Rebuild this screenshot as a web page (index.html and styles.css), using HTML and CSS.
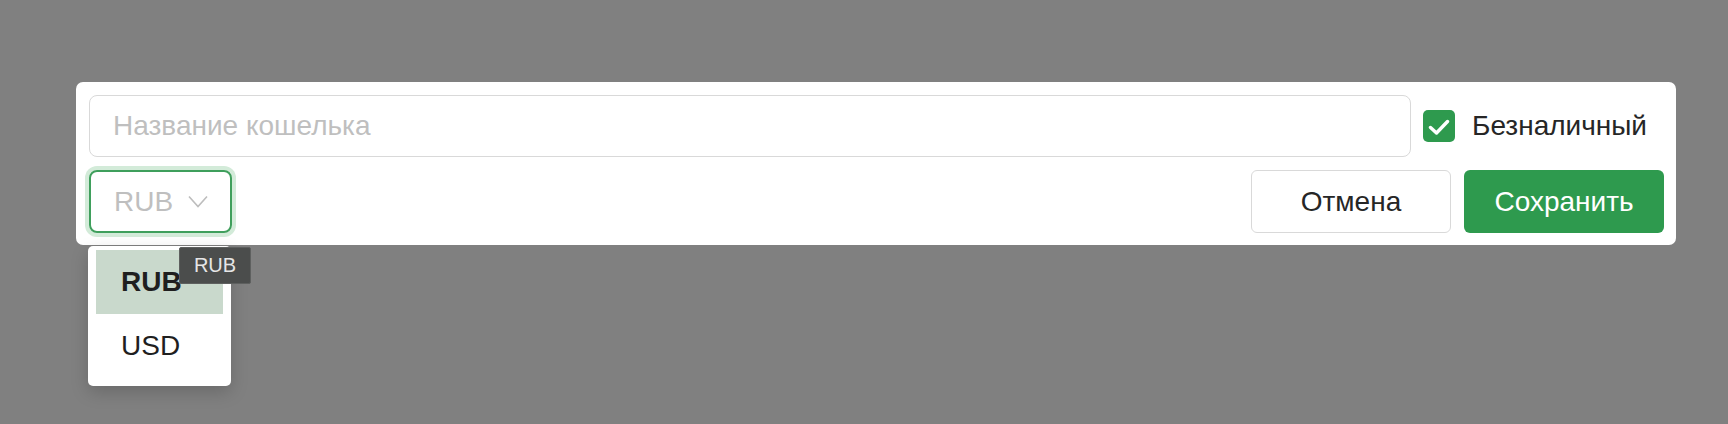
FILE: index.html
```html
<!DOCTYPE html>
<html>
<head>
<title>Новый кошелек</title>
<link rel="stylesheet" href="styles.css">
</head>
<body>
  <div class='wallet'>
    <div class='row'>
      <input class='walletname' type='text' placeholder='Название кошелька'>
      <label class='cashless'>
        <span class='checkbox'>
          <svg width='22' height='16' viewBox='0 0 22 16'><path d='M2.5 8.5 L8.5 14 L19.5 2.5' fill='none' stroke='#fff' stroke-width='3.4' stroke-linecap='round' stroke-linejoin='round'/></svg>
        </span>
        Безналичный
      </label>
    </div>
    <div class='row'>
      <div class='select'>
        <span>RUB</span>
        <svg width='20' height='13' viewBox='0 0 20 13'><path d='M1 1.5 L10 11.5 L19 1.5' fill='none' stroke='#bdbdbd' stroke-width='1.6'/></svg>
      </div>
      <div class='buttons'>
        <button class='btn cancel'>Отмена</button>
        <button class='btn save'>Сохранить</button>
      </div>
    </div>
  </div>
  <!-- open list of the currency select -->
  <div class='dropdown'>
    <div class='item current'>RUB</div>
    <div class='item'>USD</div>
    <div class='tip'>RUB</div>
  </div>
</body>
</html>
```

FILE: styles.css
```css
*{
  box-sizing: border-box;
  font-family: 'Liberation Sans', Arial, sans-serif;
}

html, body{
  height: 100%;
}

body{
  margin: 0;
  background-color: #808080;
}

.wallet{
  margin: 82px 0 0 76px;
  width: 1600px;
  padding: 13px 12px 12px 13px;
  background-color: #fff;
  border-radius: 7px;
  display: flex;
  flex-direction: column;
  gap: 13px;
}

.row{
  display: flex;
  align-items: center;
}

.walletname{
  flex: 1;
  height: 62px;
  border: 1.5px solid #d9d9d9;
  border-radius: 8px;
  padding: 0 23px;
  font-size: 28px;
  color: #262626;
  outline: none;
}
.walletname::placeholder{
  color: #bfbfbf;
}

.cashless{
  display: flex;
  align-items: center;
  gap: 17px;
  margin-left: 12px;
  padding-right: 17px;
  font-size: 28px;
  color: #262626;
}
.checkbox{
  width: 32px;
  height: 32px;
  border-radius: 5px;
  background-color: #2e9a4e;
  display: flex;
  align-items: center;
  justify-content: center;
  padding-top: 2px;
}

.select{
  width: 143px;
  height: 63px;
  border: 2px solid #3f9f5c;
  border-radius: 8px;
  box-shadow: 0 0 0 4px #d3ebd9;
  padding: 0 22px 0 23px;
  display: flex;
  align-items: center;
  justify-content: space-between;
  font-size: 28px;
  color: #bfbfbf;
}

.dropdown{
  position: relative;
  margin: 1px 0 0 88px;
  width: 143px;
  padding: 4px 8px 8px 8px;
  background-color: #fff;
  border-radius: 5px;
  box-shadow: 0 6px 18px rgba(0, 0, 0, 0.18);
}
.item{
  height: 64px;
  line-height: 64px;
  padding-left: 25px;
  font-size: 28px;
  color: #1f1f1f;
}
.item.current{
  background-color: #c9d9cc;
  font-weight: bold;
}
.tip{
  position: absolute;
  top: 1px;
  left: 91px;
  width: 72px;
  height: 37px;
  line-height: 35px;
  text-align: center;
  background-color: #4b4d4c;
  border: 1px solid #5e605f;
  border-radius: 2px;
  color: #e6e6e6;
  font-size: 20px;
}

.buttons{
  margin-left: auto;
  display: flex;
  gap: 13px;
}
.btn{
  width: 200px;
  height: 63px;
  border-radius: 6px;
  font-size: 28px;
  cursor: pointer;
}
.cancel{
  background-color: #fff;
  border: 1.5px solid #d9d9d9;
  color: #262626;
}
.save{
  background-color: #2e9a4e;
  border: none;
  color: #fff;
}
```
